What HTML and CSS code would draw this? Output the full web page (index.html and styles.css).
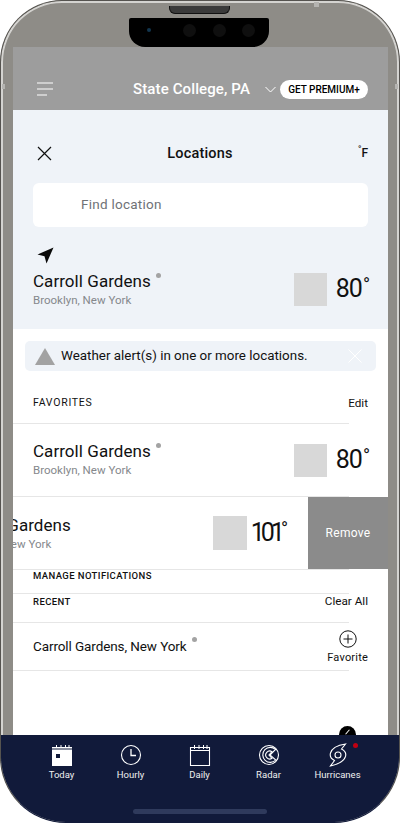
FILE: index.html
```html
<!DOCTYPE html>
<html lang="en">
<head>
<meta charset="utf-8">
<title>Locations</title>
<link rel="stylesheet" href="styles.css">
</head>
<body>
<div class="shell">
  <i class="band band-l"></i><i class="band band-r"></i><i class="band band-t"></i>
  <div class="speaker"></div>
  <div class="notch">
    <span class="lens"></span>
    <span class="sensor"></span><span class="sensor"></span><span class="sensor"></span>
  </div>
  <div class="screen">
    <header class="topbar">
      <svg class="menu" width="16" height="14" viewBox="0 0 16 14"><path d="M0 13h10M0 7h16M0 1h16" stroke="#fff" stroke-width="1" fill="none"/></svg>
      <span class="city">State College, PA</span>
      <svg class="chev" width="11" height="7" viewBox="0 0 11 7"><path d="M.5 1l5 5 5-5" stroke="#fff" stroke-width="1" fill="none"/></svg>
      <span class="premium">GET PREMIUM+</span>
    </header>

    <section class="panel">
      <div class="panel-head">
        <svg width="15" height="15" viewBox="0 0 15 15"><path d="M1 1l13 13M14 1L1 14" stroke="#111" stroke-width="1.2" fill="none"/></svg>
        <h1 class="panel-title">Locations</h1>
        <span class="unit"><sup>°</sup>F</span>
      </div>
      <div class="search">Find location</div>
      <svg class="arrow" width="17" height="17" viewBox="0 0 17 17"><path d="M16.500.500L.500 7.500l7 1.800L9.500 16.500z" fill="#0a0a0a"/></svg>
      <div class="loc loc-current">
        <div class="loc-text">
          <div class="loc-name">Carroll Gardens<i class="dot"></i></div>
          <div class="loc-sub">Brooklyn, New York</div>
        </div>
        <div class="thumb"></div>
        <div class="temp">80<span class="deg">°</span></div>
      </div>
    </section>

    <section class="list">
      <div class="alert">
        <svg width="20" height="17" viewBox="0 0 20 17"><path d="M10 0l10 17H0z" fill="#a2a2a2"/></svg>
        <span class="alert-text">Weather alert(s) in one or more locations.</span>
        <svg class="alert-x" width="14" height="14" viewBox="0 0 14 14"><path d="M.5.500l13 13M13.500.500l-13 13" stroke="#fff" stroke-width="1" fill="none"/></svg>
      </div>

      <div class="sec-head sec-fav">
        <span class="sec-title">FAVORITES</span>
        <span class="sec-action">Edit</span>
      </div>

      <div class="loc row">
        <div class="loc-text">
          <div class="loc-name">Carroll Gardens<i class="dot"></i></div>
          <div class="loc-sub">Brooklyn, New York</div>
        </div>
        <div class="thumb"></div>
        <div class="temp">80<span class="deg">°</span></div>
      </div>

      <div class="swipe">
        <div class="swipe-content">
          <div class="loc-text">
            <div class="loc-name">Carroll Gardens</div>
            <div class="loc-sub">Brooklyn, New York</div>
          </div>
          <div class="thumb thumb-lg"></div>
          <div class="temp temp-tight">101<span class="deg">°</span></div>
        </div>
        <div class="remove">Remove</div>
      </div>

      <div class="manage"><span class="sec-title sec-small">MANAGE NOTIFICATIONS</span></div>

      <div class="sec-head sec-recent">
        <span class="sec-title sec-small">RECENT</span>
        <span class="sec-action">Clear All</span>
      </div>

      <div class="recent-row">
        <div class="recent-name">Carroll Gardens, New York<i class="dot"></i></div>
        <div class="fav">
          <svg width="18" height="18" viewBox="0 0 18 18"><circle cx="9" cy="9" r="8.200" stroke="#111" stroke-width="1" fill="none"/><path d="M9 4.500v9M4.500 9h9" stroke="#111" stroke-width="1" fill="none"/></svg>
          <span>Favorite</span>
        </div>
      </div>
      <div class="fab"></div>
    </section>
  </div>

  <nav class="tabbar">
    <div class="tab">
      <svg width="22" height="22" viewBox="0 0 22 22"><path d="M1 3h20v19H1z" fill="#fff"/><path d="M5.500 1v4M10 1v4M14.500 1v4M18 1v4" stroke="#fff" stroke-width="1"/><path d="M1 5h20" stroke="#111a3a" stroke-width="1"/><path d="M5 10h4v4H5z" fill="#111a3a"/></svg>
      <span>Today</span>
    </div>
    <div class="tab">
      <svg width="22" height="22" viewBox="0 0 22 22"><circle cx="11" cy="11" r="9.500" stroke="#fff" stroke-width="1.100" fill="none"/><path d="M11 5v6.500h5" stroke="#fff" stroke-width="1.300" fill="none"/></svg>
      <span>Hourly</span>
    </div>
    <div class="tab">
      <svg width="22" height="22" viewBox="0 0 22 22"><path d="M1.500 3.500h19v18h-19zM1 6.500h20" stroke="#fff" stroke-width="1.100" fill="none"/><path d="M5.500 1v4M10 1v4M14.500 1v4M18 1v4" stroke="#fff" stroke-width="1"/></svg>
      <span>Daily</span>
    </div>
    <div class="tab">
      <svg width="22" height="22" viewBox="0 0 22 22"><circle cx="11" cy="11" r="9.500" stroke="#fff" stroke-width="1.100" fill="none"/><path d="M17.500 5.500a7.500 7.500 0 1 0 .3 10.500L12 11z" stroke="#fff" stroke-width="1.100" fill="none"/><path d="M14 7.700a4 4 0 1 0 0 6.600L11 11z" stroke="#fff" stroke-width="1.100" fill="none"/></svg>
      <span>Radar</span>
    </div>
    <div class="tab tab-alert">
      <svg width="22" height="24" viewBox="0 0 22 24"><circle cx="11" cy="12" r="3" stroke="#fff" stroke-width="1.100" fill="none"/><path d="M18.500 1C12 2 5 5 3.500 10c-1 3.500 1 6 4 7.500L3.500 23C10 21.500 17 18 18.500 13.500c1-3.500-1-6-4-7.500z" stroke="#fff" stroke-width="1.100" fill="none"/></svg>
      <span>Hurricanes</span>
      <i class="badge"></i>
    </div>
    <div class="home"></div>
  </nav>
</div>
</body>
</html>
```
FILE: styles.css
```css
* { box-sizing: border-box; }
html, body { margin: 0; padding: 0; background: #fff; }
body { font-family: Roboto, "Liberation Sans", sans-serif; color: #111; width: 400px; height: 823px; overflow: hidden; }

.shell {
  position: relative;
  width: 400px;
  height: 823px;
  padding-top: 46px;
  display: flex;
  flex-direction: column;
  overflow: hidden;
  background: #8e8c87;
  border-radius: 62px 62px 66px 66px;
  border: 1px solid #55534f;
  border-bottom-color: #111a3a;
  box-shadow: inset 0 0 0 2px #d4d3d0;
}
.band { position: absolute; background: #b5b4b1; }
.band-l { left: 1px; top: 83px; width: 3px; height: 5px; }
.band-r { right: 1px; top: 83px; width: 3px; height: 5px; }
.band-t { left: 313px; top: 1px; width: 5px; height: 5px; }
.speaker {
  position: absolute; left: 168px; top: 5px; width: 61px; height: 8px;
  background: #3a3a3a; border: 1px solid #111; border-top: 0; border-radius: 0 0 6px 6px;
}
.notch {
  position: absolute; left: 128px; top: 17px; width: 140px; height: 29px;
  background: #000; border-radius: 2px 2px 16px 16px; z-index: 2;
}
.lens { position: absolute; left: 18px; top: 10px; width: 4px; height: 4px; border-radius: 50%; background: #12364f; }
.sensor { position: absolute; top: 6px; width: 13px; height: 13px; border-radius: 50%; background: #0f0f0f; }
.sensor:nth-child(2) { left: 54px; }
.sensor:nth-child(3) { left: 84px; }
.sensor:nth-child(4) { left: 113px; }

.screen {
  position: relative;
  flex: 1;
  min-height: 0;
  margin: 0 11px 0 12px;
  display: flex;
  flex-direction: column;
  overflow: hidden;
  background: #fff;
}

.topbar {
  height: 63px;
  flex: none;
  display: flex;
  align-items: center;
  padding: 21px 0 0 24px;
  background: #9d9d9d;
  color: #fff;
}
.menu { flex: none; }
.city { margin-left: 80px; font-size: 15px; font-weight: 500; letter-spacing: .12px; white-space: nowrap; }
.chev { margin-left: 15px; flex: none; }
.premium {
  margin-left: 4px; width: 88px; height: 19px; border-radius: 10px; background: #fff; color: #000;
  font-size: 10px; font-weight: 500; line-height: 19px; text-align: center; white-space: nowrap;
}

.panel { height: 219px; flex: none; background: #eff3f8; padding: 0 20px; }
.panel-head { height: 73px; padding: 13px 0 0 4px; display: flex; align-items: center; justify-content: space-between; }
.panel-title { margin: 0 0 0 -10px; font-size: 14.500px; font-weight: 500; letter-spacing: .2px; }
.unit { font-size: 12px; font-weight: 500; }
.unit sup { font-size: 9px; line-height: 0; }
.search {
  height: 44px; border-radius: 6px; background: #fff; padding-left: 48px;
  font-size: 13.500px; line-height: 42px; color: #6f7276; letter-spacing: .25px;
}
.arrow { display: block; margin: 20px 0 0 4px; }

.loc { display: flex; align-items: center; }
.loc-current { margin-top: 7px; }
.loc-text { flex: 1; min-width: 0; }
.loc-name { font-size: 17px; line-height: 20px; letter-spacing: .05px; white-space: nowrap; }
.loc-sub { margin-top: 2px; font-size: 11.500px; line-height: 14px; color: #85888c; white-space: nowrap; }
.dot { display: inline-block; width: 5px; height: 5px; margin-left: 5px; border-radius: 50%; background: #a3a3a3; vertical-align: 9px; }
.thumb { width: 33px; height: 33px; flex: none; background: #d8d8d8; }
.thumb-lg { width: 34px; height: 34px; }
.temp { margin: 0 -2px 0 9px; font-size: 25px; line-height: 30px; white-space: nowrap; display: flex; letter-spacing: -1px; }
.temp-tight { margin: 0 0 0 4px; letter-spacing: -4px; }
.deg { font-size: 19px; line-height: 22px; letter-spacing: 0; margin-left: 1px; }
.temp-tight .deg { margin-left: 0; }

.list { position: relative; flex: 1; min-height: 0; }
.alert {
  display: flex; align-items: center; height: 30px; margin: 12px 12px 0 12px; padding: 0 14px 0 10px;
  background: #eff3f8; border-radius: 5px;
}
.alert-text { margin: 0 0 1px 6px; flex: 1; font-size: 13.400px; white-space: nowrap; }
.alert-x { flex: none; }

.sec-head { display: flex; justify-content: space-between; padding: 0 20px; }
.sec-title { font-size: 10.500px; font-weight: 400; letter-spacing: .75px; white-space: nowrap; }
.sec-small { display: block; font-size: 9.500px; font-weight: 500; line-height: 11px; letter-spacing: .4px; }
.sec-action { font-size: 11.700px; white-space: nowrap; }
.sec-fav { height: 52px; align-items: flex-start; padding-top: 25px; }

.row { height: 73px; padding: 0 20px; position: relative; }
.row .loc-text { margin-bottom: 2px; }
.row .thumb { margin-top: 2px; }
.row::before, .row::after, .swipe::after, .manage::after, .sec-recent::after, .recent-row::after {
  content: ""; position: absolute; left: 0; width: 336px; height: 1px; background: #e6e6e6;
}
.row::before { top: 0; }
.row::after { bottom: -1px; }

.swipe { position: relative; height: 73px; margin-top: 1px; display: flex; justify-content: flex-end; }
.swipe::after { bottom: 0; }
.swipe-content { position: absolute; left: -60px; top: 0; width: 335px; height: 72px; display: flex; align-items: center; background: #fff; }
.remove {
  position: relative; width: 80px; height: 72px; background: #8b8b8b; color: #fff;
  font-size: 12px; letter-spacing: .3px; display: flex; align-items: center; justify-content: center;
}

.manage { position: relative; height: 24px; padding: 0 20px; }
.manage::after { bottom: 0; }

.sec-recent { position: relative; height: 29px; align-items: flex-start; padding-top: 0; }
.sec-recent .sec-small { margin-top: 2px; }
.sec-recent::after { bottom: 0; }

.recent-row { position: relative; height: 48px; padding: 0 20px; display: flex; align-items: center; justify-content: space-between; }
.recent-row::after { bottom: 0; }
.recent-name { margin-bottom: 3px; font-size: 13.500px; letter-spacing: -.1px; white-space: nowrap; }
.fav { display: flex; flex-direction: column; align-items: center; font-size: 11px; letter-spacing: .2px; }
.fav svg { display: block; margin: -1px 0 3px; }

.fab { position: absolute; left: 326px; bottom: -8px; width: 17px; height: 17px; border-radius: 50%; background: #000; }
.fab::after { content: ""; position: absolute; left: 8px; top: 3px; width: 1px; height: 6px; background: #fff; transform: rotate(40deg); }

.tabbar {
  position: relative;
  flex: none;
  height: 88px;
  margin: 0 -1px -1px;
  padding-left: 27px;
  display: flex;
  align-items: flex-start;
  background: #111a3a;
  color: #f0f0f0;
  border-radius: 0 0 66px 66px;
}
.tab { position: relative; width: 69px; height: 56px; padding-top: 8px; display: flex; flex-direction: column; align-items: center; font-size: 9.500px; line-height: 12px; white-space: nowrap; }
.tab svg { display: block; height: 24px; margin-bottom: 2px; }
.badge { position: absolute; left: 50px; top: 8px; width: 5px; height: 5px; border-radius: 50%; background: #c00012; }
.home { position: absolute; left: 133px; top: 74px; width: 134px; height: 5px; border-radius: 3px; background: #2f3a5c; }
```
